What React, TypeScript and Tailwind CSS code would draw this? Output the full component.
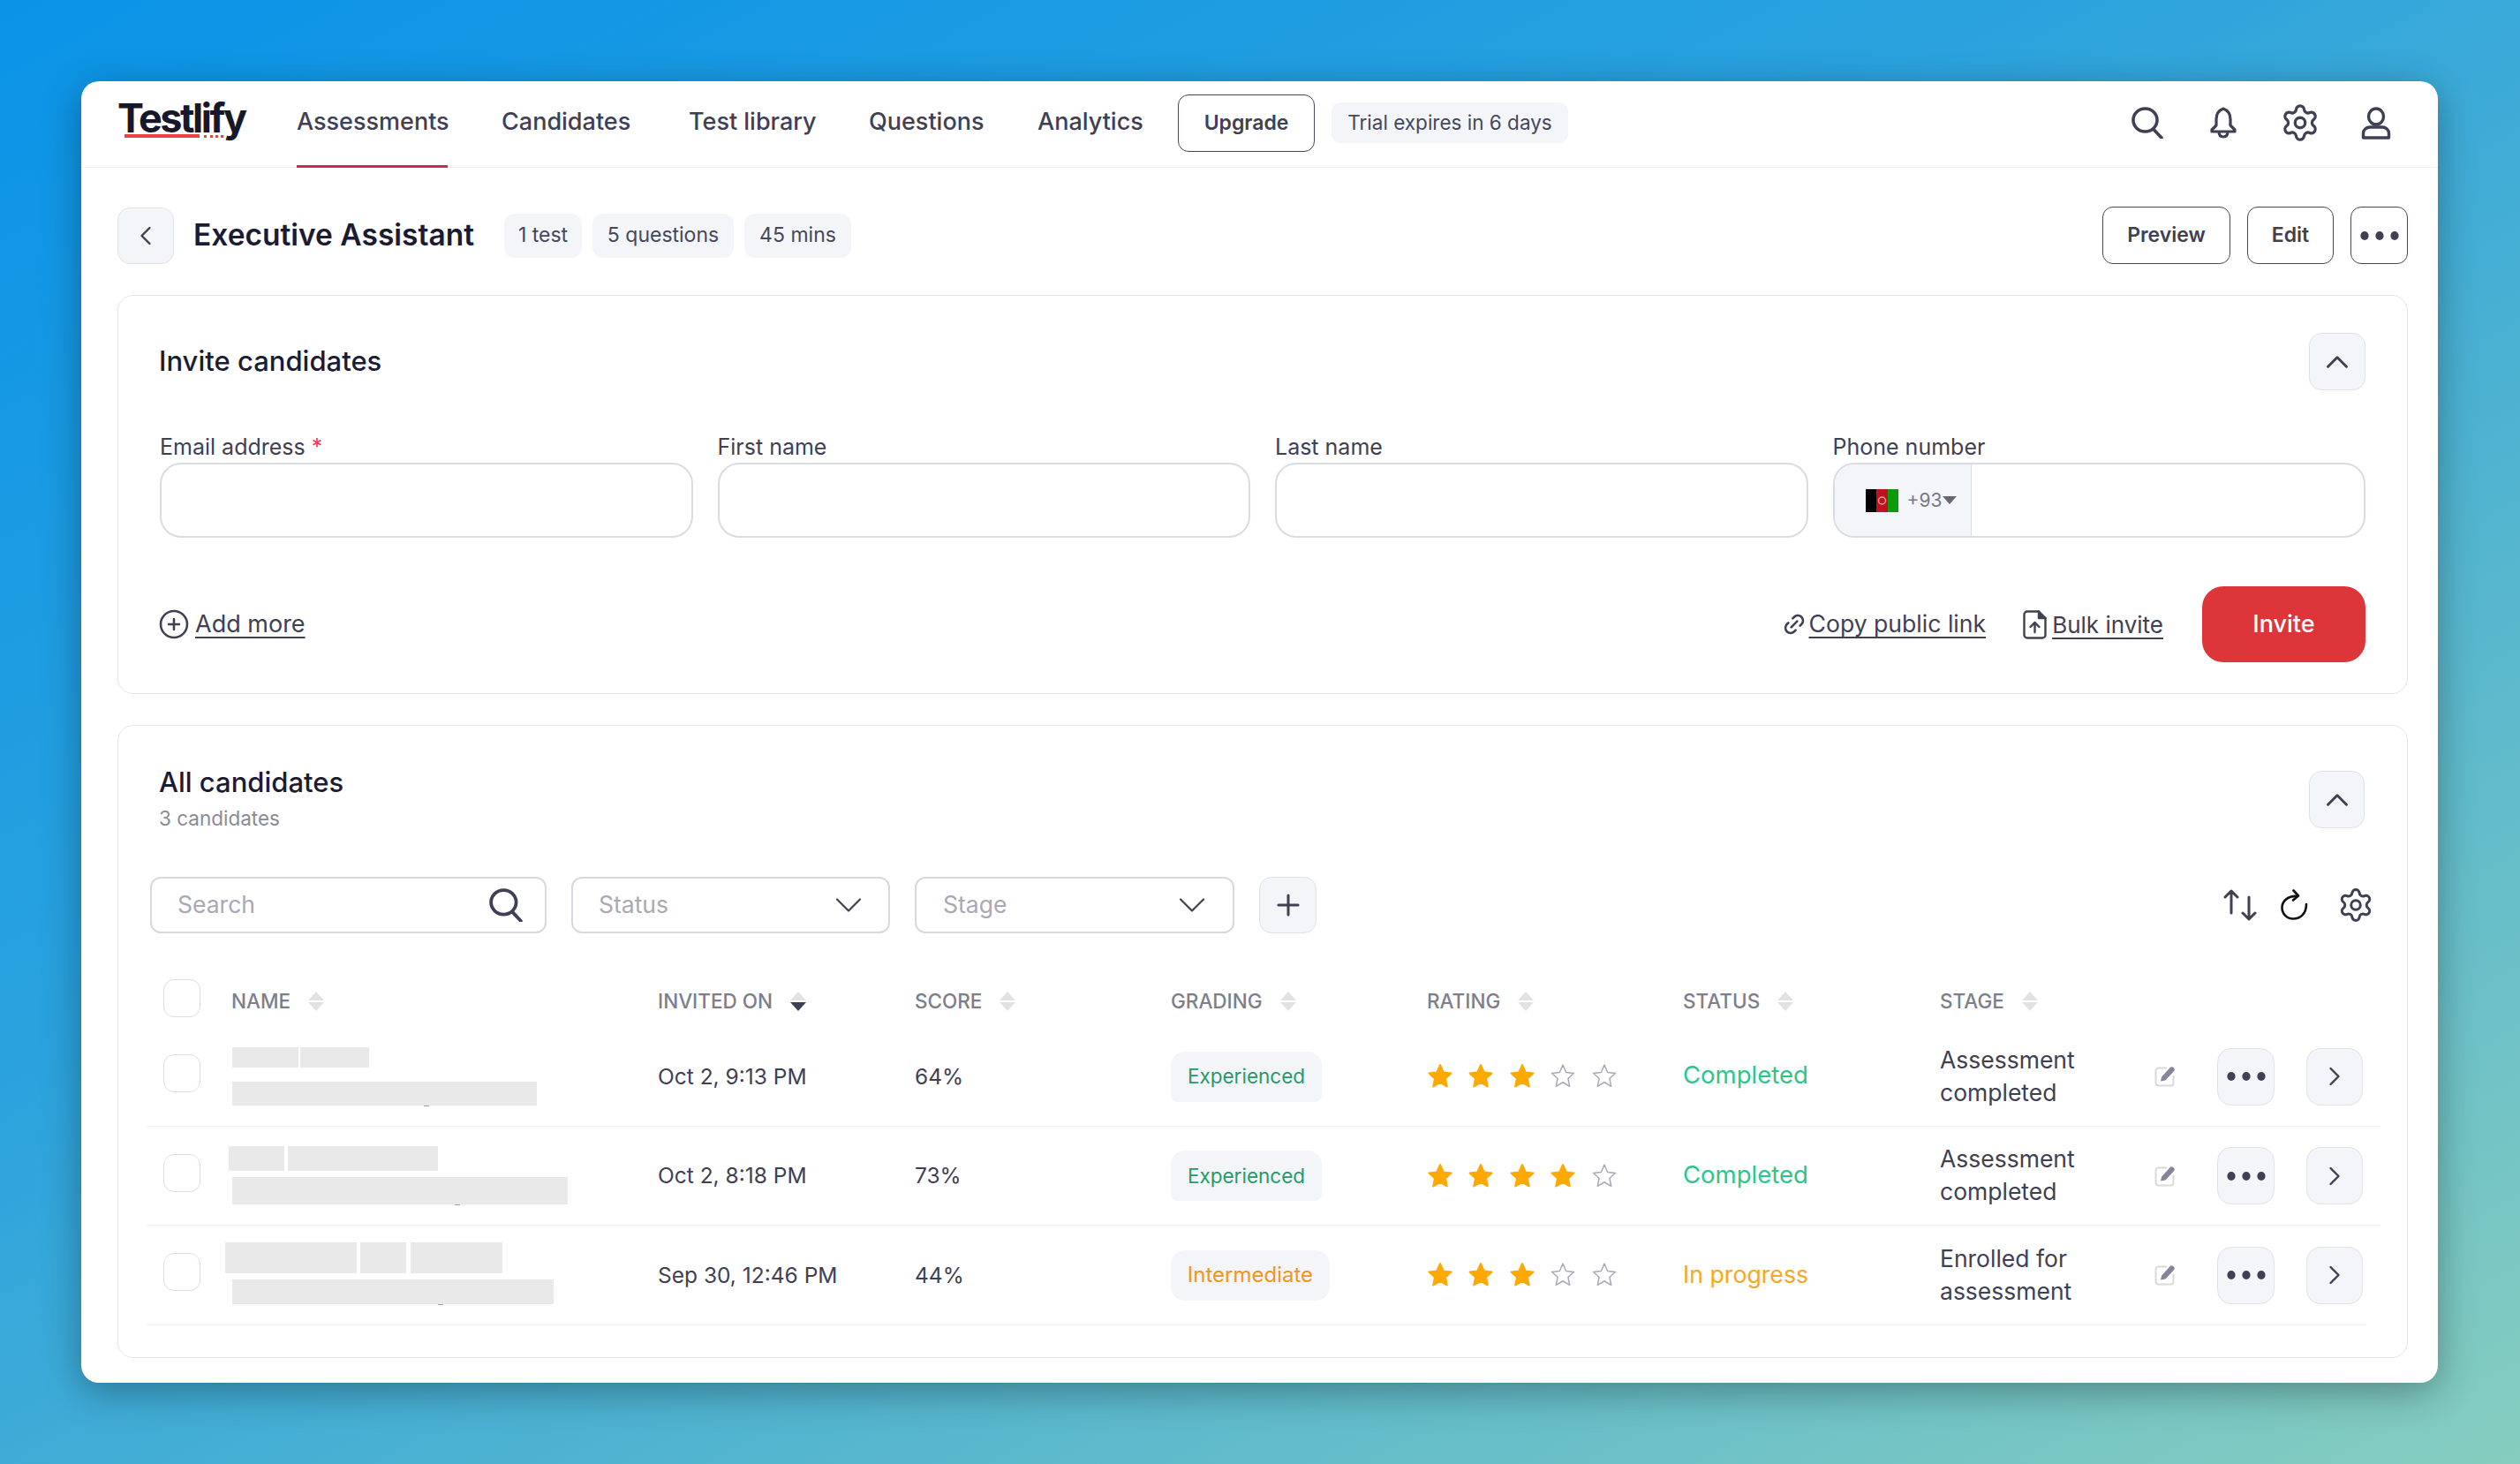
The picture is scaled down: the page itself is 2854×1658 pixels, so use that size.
import React from "react";
import { ChevronDown, ChevronLeft, ChevronRight, ChevronUp, CirclePlus, Link2, Plus, Settings } from "lucide-react";

const ink = "#3f4053";

function SearchIcon({ s = 36 }: { s?: number }) {
  return (
    <svg width={s} height={s} viewBox="0 0 36 36" fill="none" stroke={ink} strokeWidth="3.6" strokeLinecap="round">
      <ellipse cx="15.5" cy="15" rx="13.5" ry="13" />
      <path d="M25 25.5 34 35" />
    </svg>
  );
}
function BellIcon() {
  return (
    <svg width="32" height="36" viewBox="0 0 32 36" fill="none" stroke={ink} strokeWidth="3.2" strokeLinejoin="round">
      <path d="M16 2C21 4 24 8 24 14V21L29 26V28H3V26L8 21V14C8 8 11 4 16 2Z" />
      <path d="M11 28C11 32 13 34 16 34S21 32 21 28" />
    </svg>
  );
}
function UserIcon() {
  return (
    <svg width="34" height="37" viewBox="0 0 34 37" fill="none" stroke={ink} strokeWidth="3.4" strokeLinejoin="round">
      <ellipse cx="17" cy="11" rx="8.5" ry="9" />
      <path d="M2.5 35V30C2.5 26 6 23 10 23H24C28 23 31.5 26 31.5 30V35Z" />
    </svg>
  );
}
function Dots() {
  return (
    <svg width="46" height="12" viewBox="0 0 46 12" fill={ink}>
      <ellipse cx="6" cy="6" rx="4.6" ry="5" />
      <ellipse cx="23" cy="6" rx="4.6" ry="5" />
      <ellipse cx="40" cy="6" rx="4.6" ry="5" />
    </svg>
  );
}
function Caret({ active = false }: { active?: boolean }) {
  return (
    <svg width="18" height="22" viewBox="0 0 18 22">
      <path d="M9 0 18 10H0Z" fill="#e2e2e4" />
      <path d="M0 12H18L9 22Z" fill={active ? ink : "#e2e2e4"} />
    </svg>
  );
}
function Star({ on }: { on: boolean }) {
  return (
    <svg width="30" height="30" viewBox="0 0 28 28" fill={on ? "#fea800" : "none"} stroke={on ? "#fea800" : "#a8a8b8"} strokeWidth={on ? 2 : 1.4} strokeLinejoin="round">
      <path d="M14 2 17.4 9.8 25.6 10.7 19.5 16.3 21.2 24.6 14 20.3 6.8 24.6 8.5 16.3 2.4 10.7 10.6 9.8Z" />
    </svg>
  );
}
function EditIcon() {
  return (
    <svg width="24" height="24" viewBox="0 0 24 24" fill="none">
      <path d="M14 2.5H4.5A3 3 0 0 0 1.5 5.500V19.500A3 3 0 0 0 4.500 22.500H18.500A3 3 0 0 0 21.500 19.500V11" stroke="#d9d9de" strokeWidth="2" />
      <path d="M7 17.500 8.200 12.500 17.500 2.200C18.500 1 20 1 21.500 2.200 23 3.400 23.300 4.800 22.200 6L12.500 16.500Z" fill="#85859a" />
    </svg>
  );
}
function Refresh() {
  return (
    <svg width="33" height="36" viewBox="0 0 33 36" fill="none" stroke="#111" strokeWidth="2.6" strokeLinecap="round" strokeLinejoin="round">
      <path d="M20 8C10 7 2.500 13 2.500 21 2.500 28 8 33.500 15 33.500 23 33.500 30 28 30 17" />
      <path d="M15.500 1.500 21 7.500 15 12.500" />
    </svg>
  );
}
function SortIcon() {
  return (
    <svg width="38" height="36" viewBox="0 0 38 36" fill="none" stroke={ink} strokeWidth="3" strokeLinecap="round" strokeLinejoin="round">
      <path d="M9 27V2M2 9 9 2 16 9" />
      <path d="M29 9V34M22 27 29 34 36 27" />
    </svg>
  );
}
function BulkIcon() {
  return (
    <svg width="27" height="33" viewBox="0 0 27 33" fill="none" stroke={ink} strokeWidth="2.400" strokeLinejoin="round" strokeLinecap="round">
      <path d="M18 1.500H5A3.500 3.500 0 0 0 1.500 5V28A3.500 3.500 0 0 0 5 31.500H22A3.500 3.500 0 0 0 25.500 28V9Z" />
      <path d="M18 1.500V9H25.500" fill={ink} />
      <path d="M13.500 25V14M8.500 19 13.500 14 18.500 19" />
    </svg>
  );
}
function Flag() {
  return (
    <svg width="37" height="26" viewBox="0 0 37 26">
      <rect width="12" height="26" fill="#000" />
      <rect x="12" width="13" height="26" fill="#c3101f" />
      <rect x="25" width="12" height="26" fill="#0a9a0a" />
      <circle cx="18.500" cy="13" r="4" fill="none" stroke="#e9a0a0" strokeWidth="1.500" />
    </svg>
  );
}

function Chip({ children, w }: { children: React.ReactNode; w: string }) {
  return <span className={`${w} h-[50px] flex items-center justify-center rounded-[12px] bg-[#f4f5f9] text-[23px] text-[#45475a] whitespace-nowrap`}>{children}</span>;
}
function SquareBtn({ children, className = "" }: { children: React.ReactNode; className?: string }) {
  return <button className={`flex items-center justify-center rounded-[14px] border border-[#e2e3e9] bg-[#f4f5f9] ${className}`}>{children}</button>;
}
function OutlineBtn({ children, w }: { children: React.ReactNode; w: string }) {
  return <button className={`${w} h-[65px] flex items-center justify-center rounded-[12px] border border-[#45465a] bg-white text-[23px] font-semibold text-[#3f4053]`}>{children}</button>;
}
function Field({ label, req }: { label: string; req?: boolean }) {
  return (
    <div className="flex flex-col">
      <label className="h-[30px] leading-[30px] text-[25px] text-[#3f4053] whitespace-nowrap">
        {label}
        {req && <span className="text-[#f0355f]"> *</span>}
      </label>
      <input className="mt-[3px] h-[85px] rounded-[24px] border-2 border-[#d9dce2] bg-white" />
    </div>
  );
}
function Head({ label, active }: { label: string; active?: boolean }) {
  return (
    <div className="mt-[7px] flex items-center gap-[20px] text-[22.500px] font-medium text-[#7d7e8c] whitespace-nowrap">
      <span>{label}</span>
      <Caret active={active} />
    </div>
  );
}
function Check({ mb = "mb-[7px]" }: { mb?: string }) {
  return <span className={`w-[42px] h-[43px] ${mb} rounded-[12px] border border-[#dcdde2] bg-white block`} />;
}
const Bar = ({ w, h }: { w: string; h: string }) => <span className={`block ${w} ${h} bg-[#e9e9e9]`} />;
const Speck = ({ ml }: { ml: string }) => <span className={`block ${ml} w-[6px] h-[1px] bg-[#a0a0a0]`} />;

const tone: Record<string, string> = {
  green: "text-[#259b6b] text-[22.500px]",
  orange: "text-[#f2951c] text-[24px]",
};

const cols = "grid grid-cols-[77px_483px_291px_290px_290px_290px_291px_243px_71px_101px_84px] items-center";

function Row({
  h,
  date,
  score,
  grade,
  gradeTone,
  gradeW,
  flat,
  stars,
  status,
  statusCls,
  stage,
  names,
  last,
}: {
  h: string;
  date: string;
  score: string;
  grade: string;
  gradeTone: string;
  gradeW: string;
  flat: boolean;
  stars: number;
  status: string;
  statusCls: string;
  stage: [string, string];
  names: React.ReactNode;
  last?: boolean;
}) {
  return (
    <div className={`${h} pl-[20px] ${cols} border-b border-[#f3f3f5] ${last ? "mr-[16px]" : ""}`}>
      <Check />
      {names}
      <span className="text-[24.500px] text-[#3f4053] whitespace-nowrap">{date}</span>
      <span className="text-[24.500px] text-[#3f4053]">{score}</span>
      <span className={`${gradeW} h-[57px] flex items-center justify-center bg-[#f4f5f9] ${flat ? "rounded-t-[16px] rounded-b-[8px]" : "rounded-[16px]"} ${tone[gradeTone]}`}>{grade}</span>
      <div className="flex gap-[16.400px]">
        {[0, 1, 2, 3, 4].map((i) => (
          <Star key={i} on={i < stars} />
        ))}
      </div>
      <span className={`mb-[2px] whitespace-nowrap ${statusCls}`}>{status}</span>
      <div className="mb-[1px] text-[26.500px] leading-[37px] text-[#3f4053] whitespace-nowrap">
        <div>{stage[0]}</div>
        <div>{stage[1]}</div>
      </div>
      <EditIcon />
      <SquareBtn className="w-[65px] h-[65px] rounded-[16px]">
        <Dots />
      </SquareBtn>
      <SquareBtn className="w-[64px] h-[65px] rounded-[16px]">
        <ChevronRight size={36} color={ink} strokeWidth={1.600} />
      </SquareBtn>
    </div>
  );
}

export default function App() {
  return (
    <div className="w-[2854px] h-[1658px] overflow-hidden pt-[92px] pl-[92px] bg-[linear-gradient(152deg,#0a93e8_0%,#2aa2de_38%,#5cb9cc_72%,#86cdbf_100%)] [font-family:Inter,sans-serif]">
      <div className="w-[2669px] h-[1474px] rounded-[20px] bg-white shadow-[0_10px_44px_rgba(0,0,0,0.32)] overflow-hidden">
        {/* nav */}
        <header className="h-[98px] border-b border-[#f1f1f3] pl-[41px] flex items-center">
          <div className="relative w-[203px] h-[97px] flex items-center">
            <span className="text-[45px] font-bold tracking-[-2.500px] text-[#17182b] leading-none -mt-[14px]">Testlify</span>
            <span className="absolute left-[8px] top-[60px] w-[85px] h-[4px] bg-[#ef4146]" />
            <span className="absolute left-[98px] top-[61px] w-[22px] h-[2px] border-t-[3px] border-dotted border-[#ef4146]" />
          </div>
          <nav className="flex items-center gap-[61px] h-full text-[27px] font-medium text-[#3f4053]">
            <a className="relative w-[171px] h-full pb-[5px] flex items-center whitespace-nowrap">
              Assessments
              <span className="absolute left-0 right-0 bottom-[-1px] h-[3px] bg-[#c92a52]" />
            </a>
            <a className="w-[151px] -mt-[5px] whitespace-nowrap">Candidates</a>
            <a className="w-[143px] -mt-[5px] whitespace-nowrap">Test library</a>
            <a className="w-[130px] -mt-[5px] whitespace-nowrap">Questions</a>
            <a className="w-[120px] -mt-[5px] whitespace-nowrap">Analytics</a>
          </nav>
          <button className="ml-[39px] mb-[3px] w-[155px] h-[65px] rounded-[12px] border border-[#45465a] text-[23px] font-semibold text-[#3f4053]">Upgrade</button>
          <span className="ml-[19px] mb-[3px] w-[268px] h-[46px] flex items-center justify-center rounded-[10px] bg-[#f4f5f9] text-[22.500px] text-[#45475a] whitespace-nowrap">Trial expires in 6 days</span>
          <div className="ml-auto mb-[3px] pr-[27px] flex items-center">
            <span className="w-[86px] flex justify-center"><SearchIcon /></span>
            <span className="w-[86px] flex justify-center"><BellIcon /></span>
            <span className="w-[87px] flex justify-center"><Settings size={46} color={ink} strokeWidth={1.700} /></span>
            <span className="w-[86px] flex justify-center"><UserIcon /></span>
          </div>
        </header>

        <main className="px-[41px] pr-[34px]">
          {/* title row */}
          <div className="mt-[44px] h-[65px] flex items-center">
            <SquareBtn className="w-[64px] h-[64px]">
              <ChevronLeft size={36} color={ink} strokeWidth={1.600} />
            </SquareBtn>
            <h1 className="ml-[22px] w-[352px] text-[33.500px] font-semibold text-[#1b1c34] whitespace-nowrap">Executive Assistant</h1>
            <div className="flex gap-[12px]">
              <Chip w="w-[88px]">1 test</Chip>
              <Chip w="w-[160px]">5 questions</Chip>
              <Chip w="w-[121px]">45 mins</Chip>
            </div>
            <div className="ml-auto flex gap-[19px]">
              <OutlineBtn w="w-[145px]">Preview</OutlineBtn>
              <OutlineBtn w="w-[98px]">Edit</OutlineBtn>
              <OutlineBtn w="w-[65px]"><Dots /></OutlineBtn>
            </div>
          </div>

          {/* invite */}
          <section className="mt-[35px] h-[452px] rounded-[18px] border border-[#e4e5e9] pl-[47px] pr-[47px] pt-[42px]">
            <div className="h-[65px] flex items-center justify-between">
              <h2 className="-ml-[1px] text-[31px] font-medium text-[#1b1c34]">Invite candidates</h2>
              <SquareBtn className="w-[64px] h-[65px]">
                <ChevronUp size={42} color={ink} strokeWidth={1.700} />
              </SquareBtn>
            </div>
            <div className="mt-[49px] grid grid-cols-4 gap-[28px]">
              <Field label="Email address" req />
              <Field label="First name" />
              <Field label="Last name" />
              <div className="flex flex-col">
                <label className="h-[30px] leading-[30px] text-[25px] text-[#3f4053]">Phone number</label>
                <div className="mt-[3px] h-[85px] rounded-[24px] border-2 border-[#d9dce2] flex overflow-hidden">
                  <div className="w-[155px] h-full bg-[#f4f5f9] border-r border-[#dcdde2] flex items-center pl-[35px]">
                    <Flag />
                    <span className="ml-[10px] text-[21px] text-[#77788a]">+93</span>
                    <span className="ml-[1px] w-0 h-0 border-x-[8px] border-x-transparent border-t-[9px] border-t-[#666773]" />
                  </div>
                  <input className="flex-1 min-w-0" />
                </div>
              </div>
            </div>
            <div className="mt-[55px] h-[86px] flex items-center">
              <CirclePlus size={36} color={ink} strokeWidth={1.700} className="-ml-[2px]" />
              <a className="ml-[6px] text-[27px] text-[#3f4053] underline underline-offset-[5px]">Add more</a>
              <Link2 size={28} color={ink} strokeWidth={2.200} className="ml-auto -rotate-45" />
              <a className="ml-[3px] text-[26.600px] text-[#3f4053] underline underline-offset-[5px] whitespace-nowrap">Copy public link</a>
              <span className="ml-[42px]"><BulkIcon /></span>
              <a className="ml-[6px] text-[26px] text-[#3f4053] underline underline-offset-[5px] whitespace-nowrap">Bulk invite</a>
              <button className="ml-[44px] w-[185px] h-[86px] rounded-[24px] bg-[#dc363b] text-[27px] font-medium text-white">Invite</button>
            </div>
          </section>

          {/* candidates */}
          <section className="mt-[35px] h-[717px] rounded-[18px] border border-[#e4e5e9] pl-[46px] pr-[48px] pt-[51px]">
            <div className="h-[65px] flex items-start justify-between">
              <div className="-mt-[6px]">
                <h2 className="h-[38px] leading-[38px] text-[31px] font-medium text-[#1b1c34]">All candidates</h2>
                <p className="mt-[7px] h-[30px] leading-[30px] text-[22.500px] text-[#8a8b96]">3 candidates</p>
              </div>
              <SquareBtn className="w-[63px] h-[65px]">
                <ChevronUp size={42} color={ink} strokeWidth={1.700} />
              </SquareBtn>
            </div>

            <div className="mt-[55px] -ml-[10px] -mr-[11px] h-[64px] flex items-center">
              <div className="w-[449px] h-full rounded-[12px] border-2 border-[#d7d9e0] pl-[29px] pr-[25px] flex items-center justify-between text-[26.500px] text-[#a9a9b3]">
                <span>Search</span>
                <SearchIcon s={38} />
              </div>
              <div className="ml-[28px] w-[361px] h-full rounded-[12px] border-2 border-[#d7d9e0] pl-[29px] pr-[19px] flex items-center justify-between text-[26.500px] text-[#a9a9b3]">
                <span>Status</span>
                <ChevronDown size={52} color={ink} strokeWidth={1} />
              </div>
              <div className="ml-[28px] w-[362px] h-full rounded-[12px] border-2 border-[#d7d9e0] pl-[30px] pr-[20px] flex items-center justify-between text-[26.500px] text-[#a9a9b3]">
                <span>Stage</span>
                <ChevronDown size={52} color={ink} strokeWidth={1} />
              </div>
              <SquareBtn className="ml-[28px] w-[65px] h-[64px]">
                <Plus size={38} color={ink} strokeWidth={1.900} />
              </SquareBtn>
              <div className="ml-auto flex items-center">
                <SortIcon />
                <span className="ml-[26px]"><Refresh /></span>
                <span className="ml-[32px]"><Settings size={42} color={ink} strokeWidth={1.700} /></span>
              </div>
            </div>

            <div className="mt-[52px] -ml-[15px] w-[2531px]">
              <div className={`pl-[20px] h-[43px] mb-[11px] ${cols}`}>
                <Check mb="mb-0" />
                <Head label="NAME" />
                <Head label="INVITED ON" active />
                <Head label="SCORE" />
                <Head label="GRADING" />
                <Head label="RATING" />
                <Head label="STATUS" />
                <Head label="STAGE" />
              </div>
              <Row
                h="h-[113px]"
                date="Oct 2, 9:13 PM"
                score="64%"
                grade="Experienced"
                gradeTone="green"
                gradeW="w-[171px]"
                flat
                stars={3}
                status="Completed"
                statusCls="text-[#2cc58a] text-[27.500px]"
                stage={["Assessment", "completed"]}
                names={
                  <div className="flex flex-col gap-[16px] ml-[1px]">
                    <div className="flex gap-[2px]"><Bar w="w-[75px]" h="h-[23px]" /><Bar w="w-[78px]" h="h-[23px]" /></div>
                    <div><Bar w="w-[345px]" h="h-[27px]" /><Speck ml="ml-[217px]" /></div>
                  </div>
                }
              />
              <Row
                h="h-[112px]"
                date="Oct 2, 8:18 PM"
                score="73%"
                grade="Experienced"
                gradeTone="green"
                gradeW="w-[171px]"
                flat
                stars={4}
                status="Completed"
                statusCls="text-[#2cc58a] text-[27.500px]"
                stage={["Assessment", "completed"]}
                names={
                  <div className="flex flex-col gap-[7px] -ml-[3px]">
                    <div className="flex gap-[4px]"><Bar w="w-[63px]" h="h-[28px]" /><Bar w="w-[170px]" h="h-[28px]" /></div>
                    <div className="ml-[4px]"><Bar w="w-[380px]" h="h-[31px]" /><Speck ml="ml-[252px]" /></div>
                  </div>
                }
              />
              <Row
                h="h-[113px]"
                date="Sep 30, 12:46 PM"
                score="44%"
                grade="Intermediate"
                gradeTone="orange"
                gradeW="w-[180px]"
                flat={false}
                stars={3}
                status="In progress"
                statusCls="text-[#f7a823] text-[26.700px]"
                stage={["Enrolled for", "assessment"]}
                last
                names={
                  <div className="flex flex-col gap-[7px] -ml-[7px] mb-[4px]">
                    <div className="flex"><Bar w="w-[149px]" h="h-[35px]" /><span className="w-[4px]" /><Bar w="w-[52px]" h="h-[35px]" /><span className="w-[5px]" /><Bar w="w-[104px]" h="h-[35px]" /></div>
                    <div className="ml-[8px]"><Bar w="w-[364px]" h="h-[28px]" /><Speck ml="ml-[233px]" /></div>
                  </div>
                }
              />
            </div>
          </section>
        </main>
      </div>
    </div>
  );
}
